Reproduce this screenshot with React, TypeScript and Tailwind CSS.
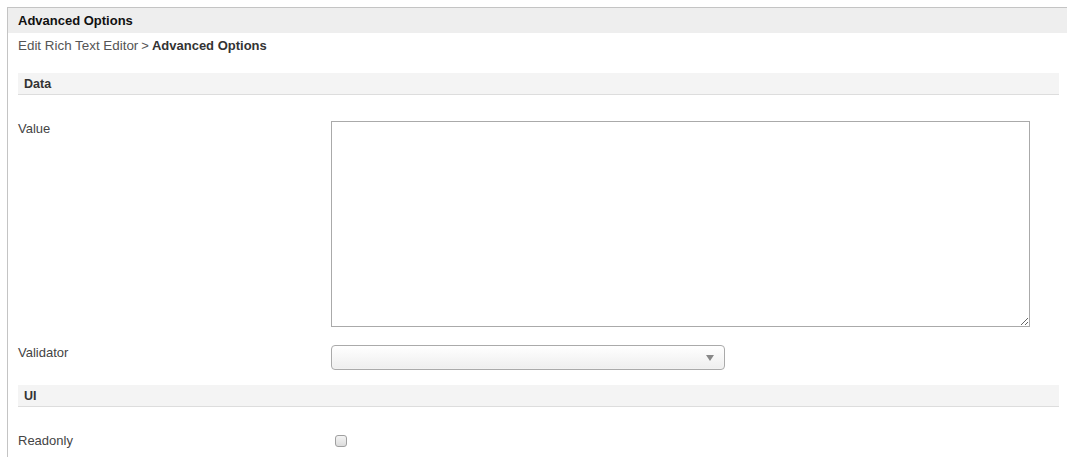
import React from "react";

export default function App() {
  return (
    <div className="pt-[7px] pl-[7px] bg-white min-h-[457px]" style={{ fontFamily: '"Liberation Sans", Arial, sans-serif' }}>
      <div className="border-l border-t border-[#c4c4c4] min-h-[450px]">
        <div className="h-[25px] bg-[#eeeeee] pl-[10px] flex items-center text-[13px] font-bold text-[#111]">
          Advanced Options
        </div>
        <div className="pl-[10px] pr-[8px]">
          <div className="h-[24px] pt-[2px] flex items-center text-[13px] text-[#555]">
            <span className="text-[13.4px]">Edit Rich Text Editor</span>
            <span className="ml-[3px] text-[13px]">&gt;</span>
            <span className="ml-[3px] font-bold text-[#333]">Advanced Options</span>
          </div>

          <div className="mt-[16px] h-[22px] pt-[1px] bg-[#f4f4f4] border-b border-[#dddddd] pl-[6px] flex items-center text-[12.5px] font-bold text-[#333]">
            Data
          </div>

          <div className="mt-[26px] flex items-start">
            <div className="w-[313px] text-[13px] leading-[15px] text-[#444]">Value</div>
            <textarea className="w-[699px] h-[206px] border border-[#aaaaaa] bg-white outline-none resize" />
          </div>

          <div className="mt-[18px] flex items-start">
            <div className="w-[313px] text-[13px] leading-[15px] text-[#444]">Validator</div>
            <div className="relative w-[394px] h-[25px] rounded-[4px] border border-[#aaaaaa] bg-gradient-to-b from-white to-[#eeeeee] shadow-[inset_0_0_2px_rgba(255,255,255,0.8)]">
              <svg className="absolute right-[10px] top-[9px]" width="8" height="6" viewBox="0 0 8 6">
                <path d="M0 0 L8 0 L4 6 Z" fill="#888" />
              </svg>
            </div>
          </div>

          <div className="mt-[15px] h-[22px] pt-[1px] bg-[#f4f4f4] border-b border-[#dddddd] pl-[6px] flex items-center text-[12.5px] font-bold text-[#333]">
            UI
          </div>

          <div className="mt-[26px] flex items-start">
            <div className="w-[313px] text-[13px] leading-[15px] text-[#444]">Readonly</div>
            <div className="ml-[4px] mt-[2px] w-[12px] h-[12px] rounded-[3px] border border-[#a0a0a0] bg-gradient-to-b from-[#f4f4f4] to-[#dcdcdc]" />
          </div>
        </div>
      </div>
    </div>
  );
}
